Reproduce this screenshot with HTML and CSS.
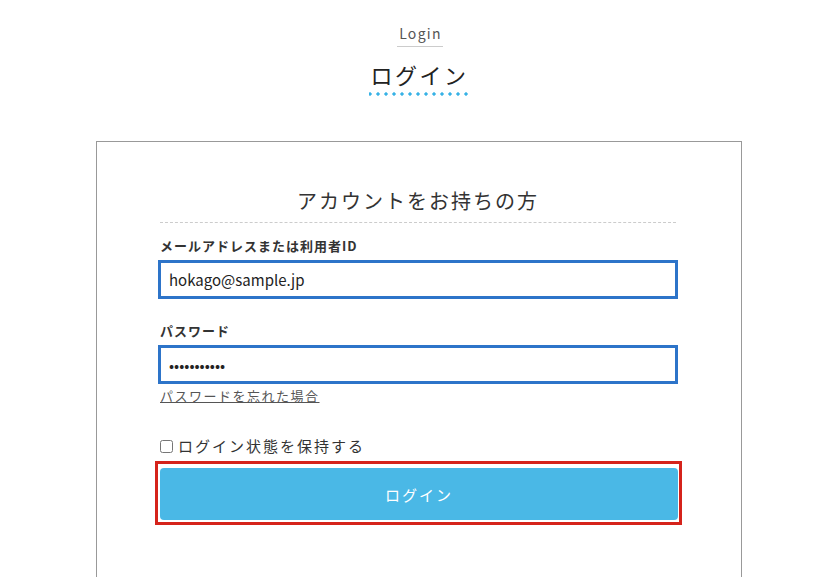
FILE: index.html
```html
<!DOCTYPE html>
<html lang="ja">
<head>
    <meta charset="UTF-8">
    <meta name="viewport" content="width=device-width, initial-scale=1.0">
    <title>ログイン</title>
    <link rel="stylesheet" href="styles.css">
</head>
<body>

<!-- ページタイトル -->
<div class="page-title">
    <span class="page-title-en">Login</span>
    <h1 class="page-title-ja">ログイン</h1>
</div>

<!-- ログインボックス -->
<div class="login-box">
    <h2 class="login-heading">アカウントをお持ちの方</h2>

    <form class="login-form">
        <label class="field-label" for="userId">メールアドレスまたは利用者ID</label>
        <input class="field-input" type="text" id="userId" value="hokago@sample.jp">

        <label class="field-label field-label-second" for="userPass">パスワード</label>
        <input class="field-input" type="password" id="userPass" value="hokagopass1">

        <a class="forgot-link" href="#">パスワードを忘れた場合</a>

        <label class="keep-login">
            <input type="checkbox" class="keep-check">
            <span>ログイン状態を保持する</span>
        </label>

        <div class="submit-wrap">
            <button type="button" class="submit-btn">ログイン</button>
        </div>
    </form>
</div>

</body>
</html>
```

FILE: styles.css
```css
body {
    font-family: "Noto Sans CJK JP", "Noto Sans", sans-serif;
    margin: 0;
    padding: 0;
    background-color: #fff;
    color: #333;
    overflow: hidden;
}
.page-title {
    display: flex;
    flex-direction: column;
    align-items: center;
    padding-top: 23px;
}
.page-title-en {
    font-size: 14px;
    line-height: 20px;
    letter-spacing: 1.3px;
    color: #555;
    padding: 0 1px 3px 2px;
    border-bottom: 1px solid #ccc;
}
.page-title-ja {
    margin: 13px 0 0;
    font-size: 22px;
    font-weight: normal;
    line-height: 28px;
    letter-spacing: 2.5px;
    color: #222;
    padding: 0 0 8px 1px;
    margin-right: 2px;
    background-image: radial-gradient(circle, #37b2e6 1.4px, transparent 1.9px);
    background-size: 8px 4px;
    background-repeat: repeat-x;
    background-position: -3px 100%;
}
.login-box {
    width: 646px;
    margin: 45px 0 0 96px;
    border: 1px solid #999;
    padding: 44px 63px 120px 61px;
    box-sizing: border-box;
    height: 560px;
}
.login-heading {
    margin: 0 2px;
    font-size: 20px;
    font-weight: normal;
    line-height: 30px;
    letter-spacing: 2px;
    text-align: center;
    color: #333;
    padding-bottom: 6px;
    border-bottom: 1px dashed #ccc;
}
.login-form {
    display: flex;
    flex-direction: column;
    align-items: flex-start;
}
.field-label {
    margin: 14px 0 0 2px;
    font-size: 13px;
    font-weight: bold;
    line-height: 18px;
    letter-spacing: 1px;
    color: #333;
}
.field-label-second {
    margin-top: 23px;
}
.field-input {
    width: 100%;
    height: 39px;
    box-sizing: border-box;
    margin-top: 5px;
    border: 3px solid #2d74c9;
    padding: 0 8px;
    font-family: "Noto Sans CJK JP", "Noto Sans", sans-serif;
    font-size: 15px;
    color: #222;
    outline: none;
}
.forgot-link {
    margin: 3px 0 0 2px;
    font-size: 13px;
    line-height: 18px;
    letter-spacing: 1.5px;
    color: #555;
    text-decoration: underline;
}
.keep-login {
    display: flex;
    align-items: center;
    margin: 31px 0 0 2px;
    font-size: 15px;
    line-height: 20px;
    letter-spacing: 2px;
    color: #333;
}
.keep-check {
    width: 13px;
    height: 13px;
    margin: 0 5px 0 0;
}
.submit-wrap {
    margin: 5px -4px 0 -3px;
    align-self: stretch;
    border: 3px solid #d5231b;
    padding: 4px 1px 2px 2px;
}
.submit-btn {
    display: block;
    width: 100%;
    height: 52px;
    border: none;
    border-radius: 4px;
    background-color: #4ab8e6;
    color: #fff;
    font-family: "Noto Sans CJK JP", "Noto Sans", sans-serif;
    font-size: 15px;
    letter-spacing: 2px;
    cursor: pointer;
}
```
